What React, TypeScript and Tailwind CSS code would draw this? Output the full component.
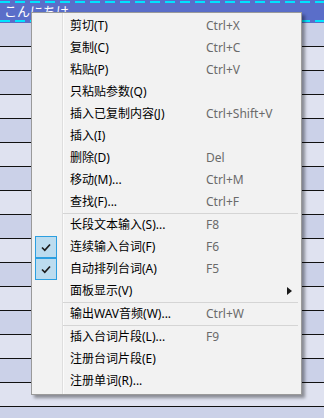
import React from "react";

type Item =
  | { type: "item"; label: string; shortcut?: string; checked?: boolean; submenu?: boolean }
  | { type: "sep" };

const items: Item[] = [
  { type: "item", label: "剪切(T)", shortcut: "Ctrl+X" },
  { type: "item", label: "复制(C)", shortcut: "Ctrl+C" },
  { type: "item", label: "粘贴(P)", shortcut: "Ctrl+V" },
  { type: "item", label: "只粘贴参数(Q)" },
  { type: "item", label: "插入已复制内容(J)", shortcut: "Ctrl+Shift+V" },
  { type: "item", label: "插入(I)" },
  { type: "item", label: "删除(D)", shortcut: "Del" },
  { type: "item", label: "移动(M)...", shortcut: "Ctrl+M" },
  { type: "item", label: "查找(F)...", shortcut: "Ctrl+F" },
  { type: "sep" },
  { type: "item", label: "长段文本输入(S)...", shortcut: "F8" },
  { type: "item", label: "连续输入台词(F)", shortcut: "F6", checked: true },
  { type: "item", label: "自动排列台词(A)", shortcut: "F5", checked: true },
  { type: "item", label: "面板显示(V)", submenu: true },
  { type: "sep" },
  { type: "item", label: "输出WAV音频(W)...", shortcut: "Ctrl+W" },
  { type: "sep" },
  { type: "item", label: "插入台词片段(L)...", shortcut: "F9" },
  { type: "item", label: "注册台词片段(E)" },
  { type: "item", label: "注册单词(R)..." },
];

const dash = "h-[2px] bg-[repeating-linear-gradient(90deg,#00e4ff_0_10px,transparent_10px_15px)]";

export default function App() {
  const rows = Array.from({ length: 17 }, (_, i) => i);
  return (
    <div
      className="relative w-[324px] h-[418px] overflow-hidden bg-[#dfe2f0]"
      style={{ fontFamily: '"Noto Sans", "Noto Sans CJK SC", sans-serif' }}
    >
      {/* header */}
      <div className="flex h-[23px] flex-col bg-[#5a6ec9] pt-[1px]">
        <div className={dash} />
        <div
          className="h-[17px] pl-[4px] text-[13px] leading-[16px] text-white"
          style={{ fontFamily: '"Noto Sans CJK JP", sans-serif' }}
        >
          こんにちは
        </div>
        <div className={dash} />
      </div>
      {/* rows */}
      <div className="flex flex-col">
        {rows.map((i) => (
          <div
            key={i}
            className={
              "h-[24px] border-b border-[#111111] " +
              (i % 2 === 0 ? "bg-[#cbd1e8]" : "bg-[#dfe2f0]")
            }
          />
        ))}
      </div>

      {/* context menu (overlay) */}
      <div className="absolute left-[31px] top-[12px] w-[271px] border border-[#9a9a9a] bg-[#f2f2f2] py-[2px] shadow-[3px_3px_3px_rgba(0,0,0,0.38)]">
        <div className="absolute left-[30px] top-0 bottom-0 w-px bg-[#dedede]" />
        <div className="absolute left-[31px] top-0 bottom-0 w-px bg-[#fbfbfb]" />
        <div className="relative flex flex-col">
          {items.map((it, idx) =>
            it.type === "sep" ? (
              <div key={idx} className="h-px ml-[31px] mr-[3px] bg-[#d5d5d5]" />
            ) : (
              <div key={idx} className="flex h-[22px] items-center text-[12px] text-[#000000]">
                <div className="flex w-[31px] h-[22px] items-center">
                  {it.checked && (
                    <div className="ml-[3px] flex h-[22px] w-[22px] items-center justify-center border border-[#2c9fe0] bg-[#bcdcef]">
                      <svg width="10" height="9" viewBox="0 0 10 9">
                        <path d="M1 4.5 L3.8 7.3 L9 1.5" fill="none" stroke="#1d1d1d" strokeWidth="1.7" />
                      </svg>
                    </div>
                  )}
                </div>
                <div className="w-[143px] pl-[7px] whitespace-nowrap leading-[22px]">{it.label}</div>
                <div className="flex-1 whitespace-nowrap leading-[22px] text-[#6a6a6a]">{it.shortcut}</div>
                {it.submenu && (
                  <svg className="mr-[9px]" width="5" height="8" viewBox="0 0 5 8">
                    <path d="M0 0 L5 4 L0 8 Z" fill="#1a1a1a" />
                  </svg>
                )}
              </div>
            )
          )}
        </div>
      </div>
    </div>
  );
}
